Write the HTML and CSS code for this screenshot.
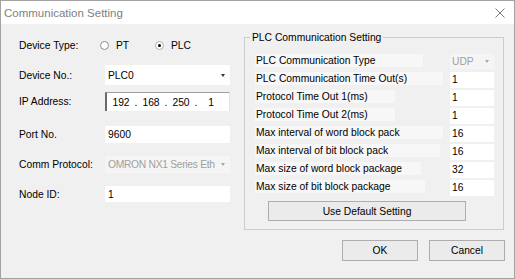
FILE: index.html
```html
<!DOCTYPE html>
<html lang="en">
<head>
<meta charset="UTF-8">
<title>Communication Setting</title>
<link rel="stylesheet" href="styles.css">
</head>
<body>
<div class="window">
    <div class="titlebar">
        <span class="title">Communication Setting</span>
        <svg class="close" width="10" height="10" viewBox="0 0 10 10">
            <path d="M0.5 0.5 L9.5 9.5 M9.5 0.5 L0.5 9.5" stroke="#7a7a7a" stroke-width="1"/>
        </svg>
    </div>
    <div class="content">
        <div class="top">
            <div class="form">
                <div class="row row-type">
                    <span class="label">Device Type:</span>
                    <div class="radios">
                        <span class="radio"><span class="dot"></span>PT</span>
                        <span class="radio"><span class="dot checked"></span>PLC</span>
                    </div>
                </div>
                <div class="row row-dev">
                    <span class="label">Device No.:</span>
                    <div class="combo"><span>PLC0</span><span class="arrow"></span></div>
                </div>
                <div class="row row-ip">
                    <span class="label">IP Address:</span>
                    <div class="ipbox">
                        <span class="oct">192</span><span class="sep">.</span>
                        <span class="oct">168</span><span class="sep">.</span>
                        <span class="oct">250</span><span class="sep">.</span>
                        <span class="oct">1</span>
                    </div>
                </div>
                <div class="row row-port">
                    <span class="label">Port No.</span>
                    <div class="field">9600</div>
                </div>
                <div class="row row-proto">
                    <span class="label">Comm Protocol:</span>
                    <div class="combo disabled"><span class="clip">OMRON NX1 Series Eth</span><span class="arrow"></span></div>
                </div>
                <div class="row row-node">
                    <span class="label">Node ID:</span>
                    <div class="field">1</div>
                </div>
            </div>

            <fieldset class="group">
                <legend>PLC Communication Setting</legend>
                <div class="prow">
                    <span class="plabel w168">PLC Communication Type</span>
                    <div class="combo small disabled"><span>UDP</span><span class="arrow"></span></div>
                </div>
                <div class="prow">
                    <span class="plabel w188">PLC Communication Time Out(s)</span>
                    <div class="pval">1</div>
                </div>
                <div class="prow">
                    <span class="plabel w140">Protocol Time Out 1(ms)</span>
                    <div class="pval">1</div>
                </div>
                <div class="prow">
                    <span class="plabel w140">Protocol Time Out 2(ms)</span>
                    <div class="pval">1</div>
                </div>
                <div class="prow">
                    <span class="plabel w188">Max interval of word block pack</span>
                    <div class="pval">16</div>
                </div>
                <div class="prow">
                    <span class="plabel w185">Max interval of bit block pack</span>
                    <div class="pval">16</div>
                </div>
                <div class="prow">
                    <span class="plabel w166">Max size of word block package</span>
                    <div class="pval">32</div>
                </div>
                <div class="prow">
                    <span class="plabel w170">Max size of bit block package</span>
                    <div class="pval">16</div>
                </div>
                <button class="btn default-btn">Use Default Setting</button>
            </fieldset>
        </div>

        <div class="actions">
            <button class="btn">OK</button>
            <button class="btn">Cancel</button>
        </div>
    </div>
</div>
</body>
</html>
```

FILE: styles.css
```css
body {
    margin: 0;
    padding: 0;
    background-color: #fff;
}

* {
    font-family: "Liberation Sans", Arial, sans-serif;
    box-sizing: border-box;
}

.window {
    width: 515px;
    height: 279px;
    border: 1px solid #a3a3a3;
    display: flex;
    flex-direction: column;
}

.titlebar {
    height: 23px;
    background-color: #fff;
    display: flex;
    align-items: center;
    justify-content: space-between;
    padding: 0 9px 0 3px;
}
.title {
    font-size: 11.5px;
    color: #808080;
}
.close {
    display: block;
}

.content {
    flex: 1;
    background-color: #f0f0f0;
    font-size: 10.3px;
    color: #000;
}

.top {
    display: flex;
    align-items: flex-start;
    padding-left: 18px;
}

/* left side */
.form {
    width: 212px;
    padding-top: 11px;
    display: flex;
    flex-direction: column;
}
.row {
    display: flex;
    align-items: center;
}
.label {
    width: 86px;
    flex-shrink: 0;
}
.row-type { height: 20px; }
.row-dev { height: 20px; margin-top: 10px; }
.row-ip { height: 19px; margin-top: 7px; }
.row-port { height: 17px; margin-top: 15px; }
.row-proto { height: 17px; margin-top: 13px; }
.row-node { height: 16px; margin-top: 13px; }

.radios {
    display: flex;
    margin-left: -5px;
}
.radio {
    display: flex;
    align-items: center;
    width: 55px;
}
.dot {
    width: 9px;
    height: 9px;
    border: 1px solid #8c8c8c;
    border-radius: 50%;
    background-color: #fff;
    margin-right: 7px;
    position: relative;
}
.dot.checked {
    border-color: #b0b0b0;
}
.dot.checked::after {
    content: "";
    position: absolute;
    left: 2px;
    top: 2px;
    width: 3px;
    height: 3px;
    border-radius: 50%;
    background-color: #000;
}

.combo, .field, .ipbox {
    width: 125px;
    height: 100%;
    background-color: #fff;
    display: flex;
    align-items: center;
}
.combo {
    justify-content: space-between;
    padding: 0 5px 0 3px;
}
.combo.disabled {
    background-color: #f5f5f5;
    color: #a0a0a0;
}
.combo .clip {
    white-space: nowrap;
    letter-spacing: -0.3px;
}
.arrow {
    width: 0;
    height: 0;
    border-left: 2.5px solid transparent;
    border-right: 2.5px solid transparent;
    border-top: 3px solid #333;
    flex-shrink: 0;
}
.disabled .arrow {
    border-top-color: #a8a8a8;
}
.field {
    padding-left: 3px;
}
.ipbox {
    border-left: 2px solid #6a6a6a;
    border-top: 1px solid #a0a0a0;
    border-right: 1px solid #e3e3e3;
    padding-left: 4px;
}
.oct {
    width: 20px;
    text-align: center;
}
.sep {
    width: 10px;
    text-align: center;
}

/* right group */
.group {
    width: 260px;
    margin: 7px 0 0 13px;
    padding: 10px 9px 8px 10px;
    border: 1px solid #cdcdcd;
    min-width: 0;
}
.group legend {
    padding: 0 2px;
    margin-left: -5px;
    line-height: 13px;
}
.prow {
    display: flex;
    justify-content: space-between;
    align-items: flex-start;
    height: 16px;
    margin-bottom: 2px;
}
.plabel {
    height: 13px;
    line-height: 13px;
    padding-left: 1px;
    background-color: #f7f7f7;
    white-space: nowrap;
}
.w140 { width: 140px; }
.w166 { width: 166px; }
.w168 { width: 168px; }
.w170 { width: 170px; }
.w185 { width: 185px; }
.w188 { width: 188px; }

.pval {
    width: 44px;
    height: 16px;
    background-color: #fff;
    padding-left: 2px;
    line-height: 16px;
}
.combo.small {
    width: 44px;
    height: 15px;
    padding: 0 5px 0 2px;
}

.btn {
    font-size: 10.3px;
    background-color: #ebebeb;
    border: 1px solid #adadad;
    color: #000;
    padding: 0;
}
.default-btn {
    display: block;
    width: 198px;
    height: 20px;
    margin: 5px 0 0 13px;
}

.actions {
    display: flex;
    justify-content: flex-end;
    gap: 11px;
    padding-right: 9px;
    margin-top: 10px;
}
.actions .btn {
    width: 76px;
    height: 21px;
}
```
